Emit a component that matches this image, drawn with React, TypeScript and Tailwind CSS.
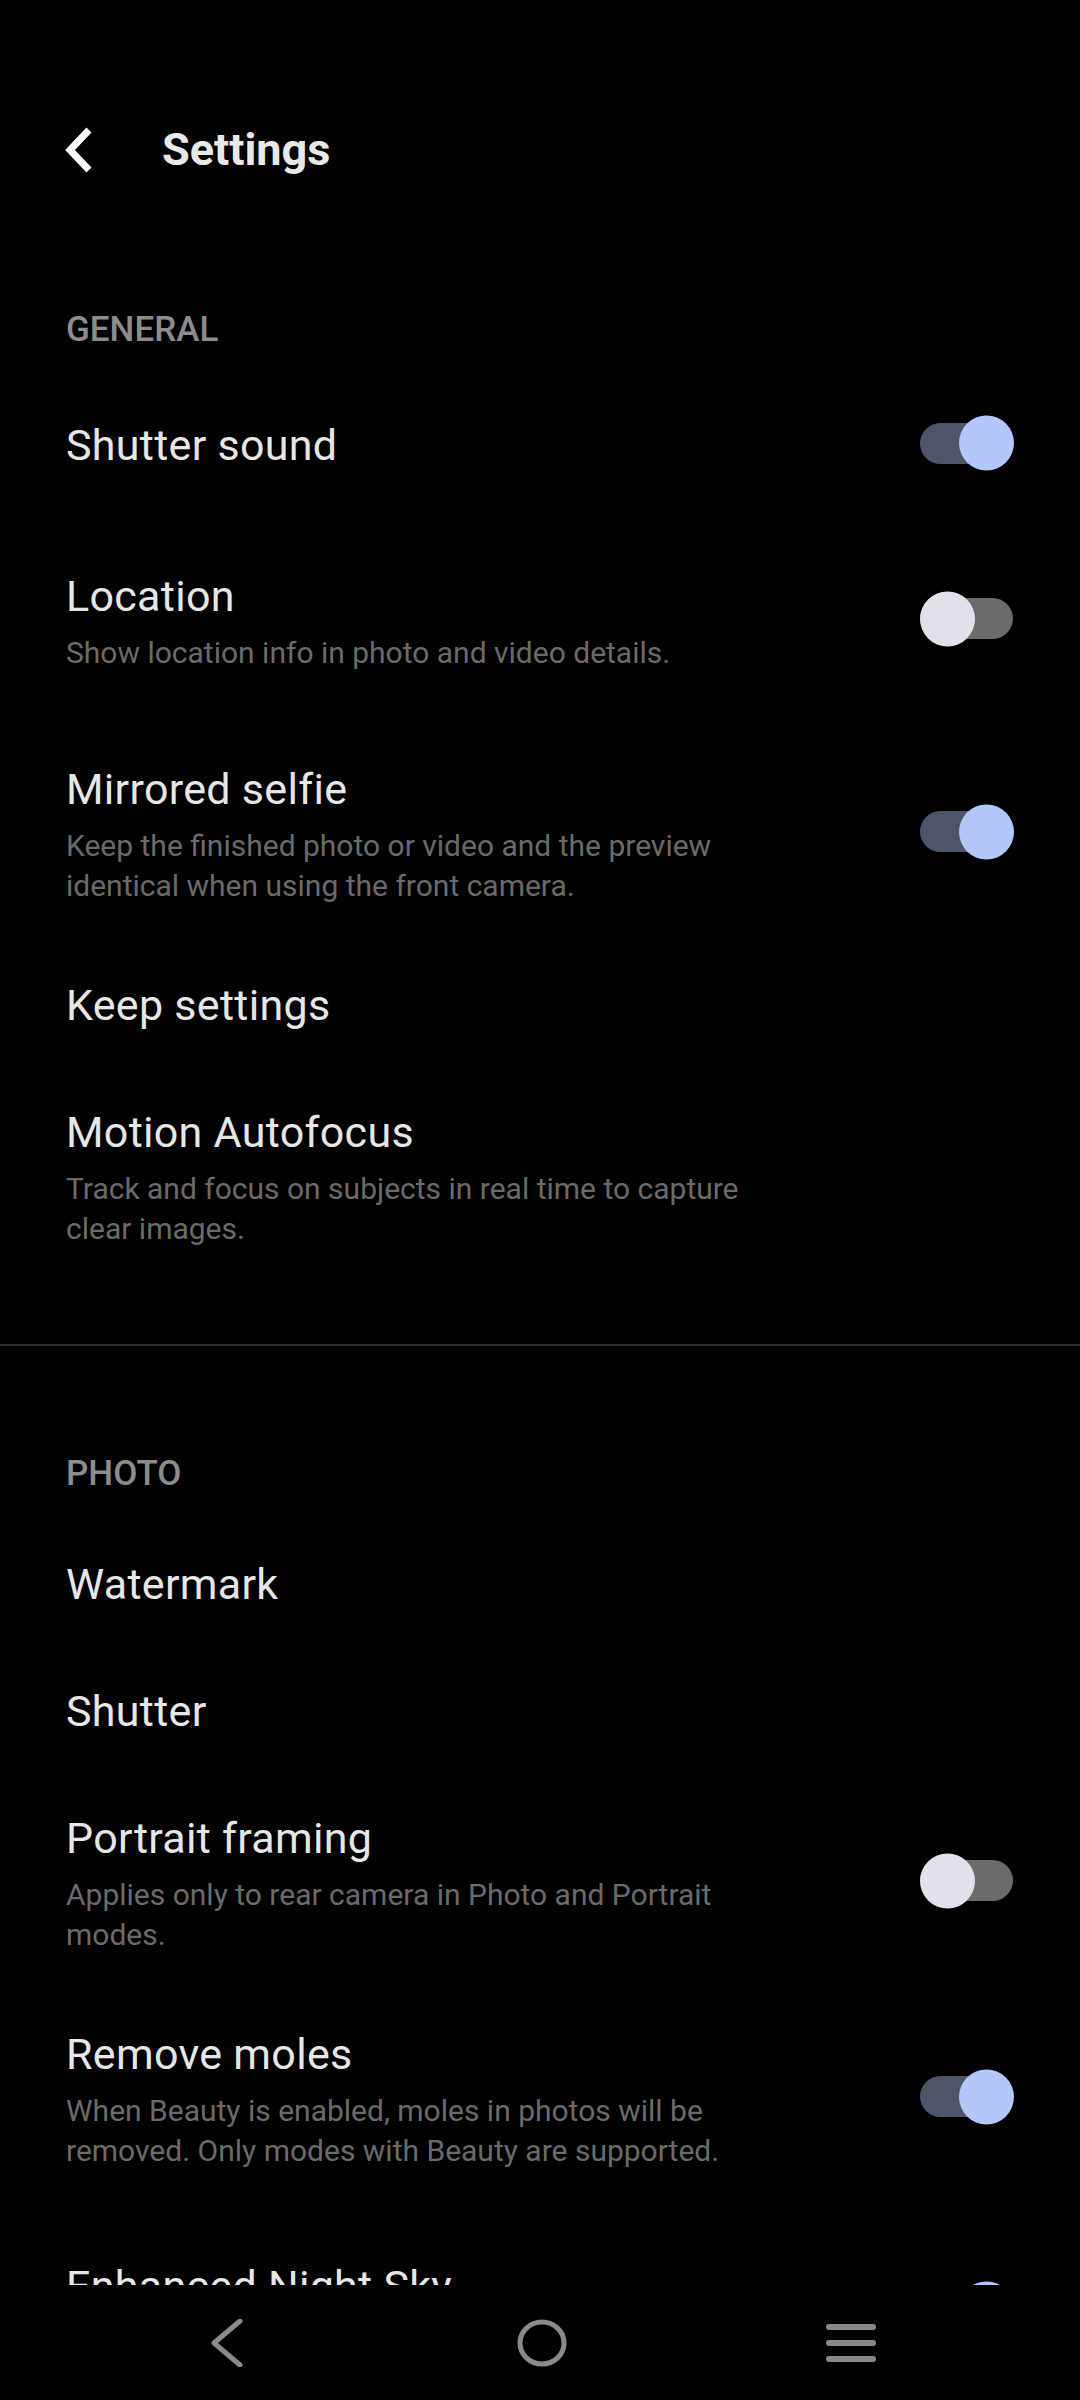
import React from 'react';

interface RowProps {
  title: string;
  sub?: string;
  toggle?: boolean;
  on?: boolean;
  className?: string;
}

const Toggle = ({ on }: { on: boolean }) => (
  <div className={`relative h-[41px] w-[93px] rounded-full ${on ? 'bg-[#4e5569]' : 'bg-[#6b6b6b]'}`}>
    <div
      className={`absolute top-1/2 h-[55px] w-[55px] -translate-y-1/2 rounded-full ${
        on ? 'right-[-1px] bg-[#b3c7fb]' : 'left-0 bg-[#e2e1ea]'
      }`}
    />
  </div>
);

const Row = ({ title, sub, toggle = false, on = false, className = '' }: RowProps) => (
  <div className={`flex items-center justify-between pl-[66px] pr-[67px] ${className}`}>
    <div className="w-[700px]">
      <div className="text-[43px] leading-[56px] tracking-[0.3px] text-[#e6e6e6]">{title}</div>
      {sub && <div className="mt-[9px] text-[30px] leading-[40px] text-[#6a6a6a]">{sub}</div>}
    </div>
    {toggle && (
      <div className="-mt-1">
        <Toggle on={on} />
      </div>
    )}
  </div>
);

const SectionLabel = ({ label, className = '' }: { label: string; className?: string }) => (
  <div className={`pl-[66px] text-[35px] font-medium leading-[48px] text-[#8c8c8c] ${className}`}>{label}</div>
);

export default function App() {
  return (
    <div className="flex h-[2400px] w-[1080px] flex-col overflow-hidden bg-black font-['Roboto',sans-serif]">
      <div className="flex-1 overflow-hidden">
        {/* Header */}
        <div className="mt-[94px] flex h-[112px] items-center pl-[62px]">
          <svg width="34" height="50" viewBox="0 0 34 50" fill="none">
            <path d="M27 5 L8 25 L27 45" stroke="#ffffff" strokeWidth="7" strokeLinejoin="miter" />
          </svg>
          <h1 className="ml-[66px] text-[45px] font-bold text-[#e8e8e8]">Settings</h1>
        </div>

        {/* General */}
        <SectionLabel label="GENERAL" className="mt-[100px]" />
        <Row title="Shutter sound" toggle on className="mt-[63px]" />
        <Row
          title="Location"
          sub="Show location info in photo and video details."
          toggle
          className="mt-[95px]"
        />
        <Row
          title="Mirrored selfie"
          sub="Keep the finished photo or video and the preview identical when using the front camera."
          toggle
          on
          className="mt-[88px]"
        />
        <Row title="Keep settings" className="mt-[71px]" />
        <Row
          title="Motion Autofocus"
          sub="Track and focus on subjects in real time to capture clear images."
          className="mt-[71px]"
        />

        <div className="mt-[95px] h-[2px] w-full bg-[#2b2b2b]" />

        {/* Photo */}
        <SectionLabel label="PHOTO" className="mt-[104px]" />
        <Row title="Watermark" className="mt-[58px]" />
        <Row title="Shutter" className="mt-[71px]" />
        <Row
          title="Portrait framing"
          sub="Applies only to rear camera in Photo and Portrait modes."
          toggle
          className="mt-[71px]"
        />
        <Row
          title="Remove moles"
          sub="When Beauty is enabled, moles in photos will be removed. Only modes with Beauty are supported."
          toggle
          on
          className="mt-[71px]"
        />
        <Row
          title="Enhanced Night Sky"
          sub="Capture clearer photos of the night sky."
          toggle
          on
          className="mt-[87px]"
        />
      </div>

      {/* Navigation bar */}
      <div className="flex h-[115px] shrink-0 items-center bg-black">
        <svg className="ml-[211px]" width="32" height="48" viewBox="0 0 32 48" fill="none">
          <path d="M29 2 L3 24 L29 46" stroke="#8a8a8a" strokeWidth="5" strokeLinecap="round" strokeLinejoin="round" />
        </svg>
        <svg className="ml-[273px]" width="52" height="50" viewBox="0 0 52 50" fill="none">
          <ellipse cx="26" cy="25" rx="22" ry="21" stroke="#8a8a8a" strokeWidth="5" />
        </svg>
        <div className="ml-[258px] flex w-[50px] flex-col gap-[10px]">
          <div className="h-[6px] rounded-full bg-[#8a8a8a]" />
          <div className="h-[6px] rounded-full bg-[#8a8a8a]" />
          <div className="h-[6px] rounded-full bg-[#8a8a8a]" />
        </div>
      </div>
    </div>
  );
}
